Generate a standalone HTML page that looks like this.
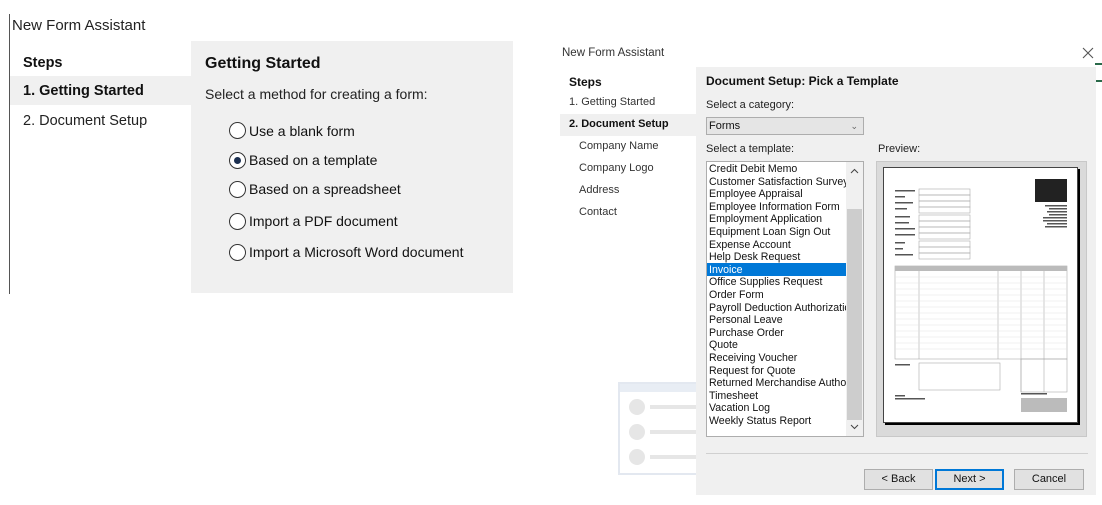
<!DOCTYPE html>
<html><head><meta charset="utf-8"><style>
*{margin:0;padding:0;box-sizing:border-box}
body{width:1102px;height:505px;background:#fff;position:relative;overflow:hidden;font-family:"Liberation Sans",Arial,sans-serif;color:#111}
.a{position:absolute;white-space:nowrap}
.rad{position:absolute;width:17px;height:17px;border:1.5px solid #333;border-radius:50%;background:#fff}
.li{position:absolute;left:709px;font-size:10.6px;line-height:12.6px;white-space:nowrap}
.btn{position:absolute;top:469px;height:21px;background:#e1e1e1;border:1px solid #adadad;font-size:11px;text-align:center;line-height:19px}
</style></head><body>
<!-- left -->
<div class="a" style="left:9px;top:14px;width:1px;height:280px;background:#555"></div>
<div class="a" style="left:12px;top:17px;font-size:15px;color:#222">New Form Assistant</div>
<div class="a" style="left:191px;top:41px;width:322px;height:252px;background:#f0f0f0"></div>
<div class="a" style="left:10px;top:76px;width:181px;height:29px;background:#f0f0f0"></div>
<div class="a" style="left:23px;top:55px;font-size:14.5px;font-weight:bold">Steps</div>
<div class="a" style="left:23px;top:83px;font-size:14.5px;font-weight:bold">1. Getting Started</div>
<div class="a" style="left:23px;top:113px;font-size:14.5px;color:#222">2. Document Setup</div>
<div class="a" style="left:205px;top:55px;font-size:16px;font-weight:bold">Getting Started</div>
<div class="a" style="left:205px;top:86px;font-size:14px;color:#222">Select a method for creating a form:</div>
<div class="rad" style="left:229px;top:122px"></div>
<div class="rad" style="left:229px;top:152px"><div style="position:absolute;left:3.5px;top:3.5px;width:7px;height:7px;border-radius:50%;background:#1b2f50"></div></div>
<div class="rad" style="left:229px;top:181px"></div>
<div class="rad" style="left:229px;top:213px"></div>
<div class="rad" style="left:229px;top:244px"></div>
<div class="a" style="left:249px;top:123px;font-size:14px">Use a blank form</div>
<div class="a" style="left:249px;top:152px;font-size:14px">Based on a template</div>
<div class="a" style="left:249px;top:181px;font-size:14px">Based on a spreadsheet</div>
<div class="a" style="left:249px;top:213px;font-size:14px">Import a PDF document</div>
<div class="a" style="left:249px;top:244px;font-size:14px">Import a Microsoft Word document</div>
<!-- decoration -->
<div class="a" style="left:618px;top:382px;width:80px;height:93px;border:2px solid #e3e8f0;background:#fff"></div>
<div class="a" style="left:620px;top:384px;width:78px;height:8px;background:#e8edf4"></div>
<div class="a" style="left:629px;top:399px;width:16px;height:16px;border-radius:50%;background:#e6e6e6"></div>
<div class="a" style="left:629px;top:424px;width:16px;height:16px;border-radius:50%;background:#e6e6e6"></div>
<div class="a" style="left:629px;top:449px;width:16px;height:16px;border-radius:50%;background:#e6e6e6"></div>
<div class="a" style="left:650px;top:405px;width:46px;height:4px;background:#e6e6e6"></div>
<div class="a" style="left:650px;top:430px;width:46px;height:4px;background:#e6e6e6"></div>
<div class="a" style="left:650px;top:455px;width:46px;height:4px;background:#e6e6e6"></div>
<!-- right -->
<div class="a" style="left:562px;top:47px;font-size:11.5px;color:#333">New Form Assistant</div>
<svg class="a" style="left:1082px;top:47px" width="12" height="12"><path d="M1 1L11 11M11 1L1 11" stroke="#555" stroke-width="1.1"/></svg>
<div class="a" style="left:1095px;top:63px;width:7px;height:2px;background:#2a6a4a"></div>
<div class="a" style="left:1095px;top:80px;width:7px;height:2px;background:#2a6a4a"></div>
<div class="a" style="left:696px;top:67px;width:400px;height:428px;background:#f0f0f0"></div>
<div class="a" style="left:560px;top:114px;width:136px;height:22px;background:#f0f0f0"></div>
<div class="a" style="left:569px;top:75px;font-size:12px;font-weight:bold">Steps</div>
<div class="a" style="left:569px;top:96px;font-size:11px;color:#333">1. Getting Started</div>
<div class="a" style="left:569px;top:118px;font-size:11px;font-weight:bold">2. Document Setup</div>
<div class="a" style="left:579px;top:140px;font-size:11px;color:#333">Company Name</div>
<div class="a" style="left:579px;top:162px;font-size:11px;color:#333">Company Logo</div>
<div class="a" style="left:579px;top:184px;font-size:11px;color:#333">Address</div>
<div class="a" style="left:579px;top:206px;font-size:11px;color:#333">Contact</div>
<div class="a" style="left:706px;top:74px;font-size:12px;font-weight:bold">Document Setup: Pick a Template</div>
<div class="a" style="left:706px;top:99px;font-size:11px;color:#222">Select a category:</div>
<div class="a" style="left:706px;top:117px;width:158px;height:18px;background:#e5e5e5;border:1px solid #adadad;font-size:11px;line-height:16px;padding-left:2px">Forms<span style="position:absolute;right:5px;top:0;font-size:9px;color:#666">⌄</span></div>
<div class="a" style="left:706px;top:143px;font-size:11px;color:#222">Select a template:</div>
<div class="a" style="left:878px;top:143px;font-size:11px;color:#222">Preview:</div>
<div class="a" style="left:706px;top:161px;width:158px;height:276px;background:#fff;border:1px solid #adadad"></div>
<div class="a" style="left:846px;top:162px;width:17px;height:274px;background:#f0f0f0"></div>
<div class="a" style="left:847px;top:209px;width:15px;height:211px;background:#cdcdcd"></div>
<svg class="a" style="left:850px;top:168px" width="9" height="6"><path d="M1 5L4.5 1.5L8 5" stroke="#444" fill="none"/></svg>
<svg class="a" style="left:850px;top:424px" width="9" height="6"><path d="M1 1L4.5 4.5L8 1" stroke="#444" fill="none"/></svg>
<div class="a" style="left:707px;top:263px;width:139px;height:13px;background:#0078d7"></div>
<div style="position:absolute;left:0;top:163px;width:846px;height:270px;overflow:hidden">
<div class="li" style="top:0">Credit Debit Memo</div>
<div class="li" style="top:12.6px">Customer Satisfaction Survey</div>
<div class="li" style="top:25.2px">Employee Appraisal</div>
<div class="li" style="top:37.8px">Employee Information Form</div>
<div class="li" style="top:50.4px">Employment Application</div>
<div class="li" style="top:63px">Equipment Loan Sign Out</div>
<div class="li" style="top:75.6px">Expense Account</div>
<div class="li" style="top:88.2px">Help Desk Request</div>
<div class="li" style="top:100.8px;color:#fff">Invoice</div>
<div class="li" style="top:113.4px">Office Supplies Request</div>
<div class="li" style="top:126px">Order Form</div>
<div class="li" style="top:138.6px">Payroll Deduction Authorization</div>
<div class="li" style="top:151.2px">Personal Leave</div>
<div class="li" style="top:163.8px">Purchase Order</div>
<div class="li" style="top:176.4px">Quote</div>
<div class="li" style="top:189px">Receiving Voucher</div>
<div class="li" style="top:201.6px">Request for Quote</div>
<div class="li" style="top:214.2px">Returned Merchandise Authorization</div>
<div class="li" style="top:226.8px">Timesheet</div>
<div class="li" style="top:239.4px">Vacation Log</div>
<div class="li" style="top:252px">Weekly Status Report</div>
</div>
<!-- preview -->
<div class="a" style="left:876px;top:161px;width:211px;height:276px;background:#dadada;border:1px solid #c8c8c8"></div>
<div class="a" style="left:883px;top:167px;width:195px;height:256px;background:#fff;border:1px solid #444;box-shadow:2px 2px 0 #000"></div>
<svg class="a" style="left:883px;top:167px" width="195" height="256" viewBox="0 0 195 256">
<g stroke="#aaa" stroke-width="0.6" fill="none">
<rect x="36" y="22" width="51" height="6"/><rect x="36" y="28" width="51" height="6"/><rect x="36" y="34" width="51" height="6"/><rect x="36" y="40" width="51" height="6"/>
<rect x="36" y="48" width="51" height="6"/><rect x="36" y="54" width="51" height="6"/><rect x="36" y="60" width="51" height="6"/><rect x="36" y="66" width="51" height="6"/>
<rect x="36" y="74" width="51" height="6"/><rect x="36" y="80" width="51" height="6"/><rect x="36" y="86" width="51" height="6"/>
<rect x="12" y="99" width="172" height="93"/>
<line x1="36" y1="99" x2="36" y2="192"/><line x1="115" y1="99" x2="115" y2="192"/><line x1="138" y1="99" x2="138" y2="225"/><line x1="161" y1="99" x2="161" y2="225"/>
<rect x="36" y="196" width="81" height="27"/>
<rect x="138" y="192" width="46" height="33"/>
</g>
<rect x="12" y="99" width="172" height="5" fill="#bbb"/>
<g stroke="#e4e4e4" stroke-width="0.5"><line x1="12" y1="110" x2="184" y2="110"/><line x1="12" y1="116" x2="184" y2="116"/><line x1="12" y1="122" x2="184" y2="122"/><line x1="12" y1="128" x2="184" y2="128"/><line x1="12" y1="134" x2="184" y2="134"/><line x1="12" y1="140" x2="184" y2="140"/><line x1="12" y1="146" x2="184" y2="146"/><line x1="12" y1="152" x2="184" y2="152"/><line x1="12" y1="158" x2="184" y2="158"/><line x1="12" y1="164" x2="184" y2="164"/><line x1="12" y1="170" x2="184" y2="170"/><line x1="12" y1="176" x2="184" y2="176"/><line x1="12" y1="182" x2="184" y2="182"/></g>
<rect x="152" y="12" width="32" height="23" fill="#222"/>
<g fill="#555"><rect x="12" y="23" width="20" height="1.5"/><rect x="12" y="29" width="10" height="1.5"/><rect x="12" y="35" width="18" height="1.5"/><rect x="12" y="41" width="12" height="1.5"/><rect x="12" y="49" width="15" height="1.5"/><rect x="12" y="55" width="14" height="1.5"/><rect x="12" y="61" width="20" height="1.5"/><rect x="12" y="67" width="20" height="1.5"/><rect x="12" y="75" width="10" height="1.5"/><rect x="12" y="81" width="8" height="1.5"/><rect x="12" y="87" width="18" height="1.5"/>
<rect x="162" y="38" width="22" height="1.5"/><rect x="166" y="41" width="18" height="1.5"/><rect x="164" y="44" width="20" height="1.5"/><rect x="166" y="47" width="18" height="1.5"/><rect x="160" y="50" width="24" height="1.5"/><rect x="160" y="53" width="24" height="1.5"/><rect x="164" y="56" width="20" height="1.5"/><rect x="162" y="59" width="22" height="1.5"/>
<rect x="12" y="197" width="15" height="1.5"/><rect x="12" y="228" width="10" height="1.5"/><rect x="12" y="231" width="30" height="1.5"/><rect x="138" y="226" width="26" height="1.5"/></g>
<rect x="138" y="231" width="46" height="14" fill="#bbb"/>
</svg>
<div class="a" style="left:706px;top:453px;width:382px;height:1px;background:#d0d0d0"></div>
<div class="btn" style="left:864px;width:69px">&lt; Back</div>
<div class="btn" style="left:935px;width:69px;border:2px solid #0078d7;line-height:17px">Next &gt;</div>
<div class="btn" style="left:1014px;width:70px">Cancel</div>
</body></html>
